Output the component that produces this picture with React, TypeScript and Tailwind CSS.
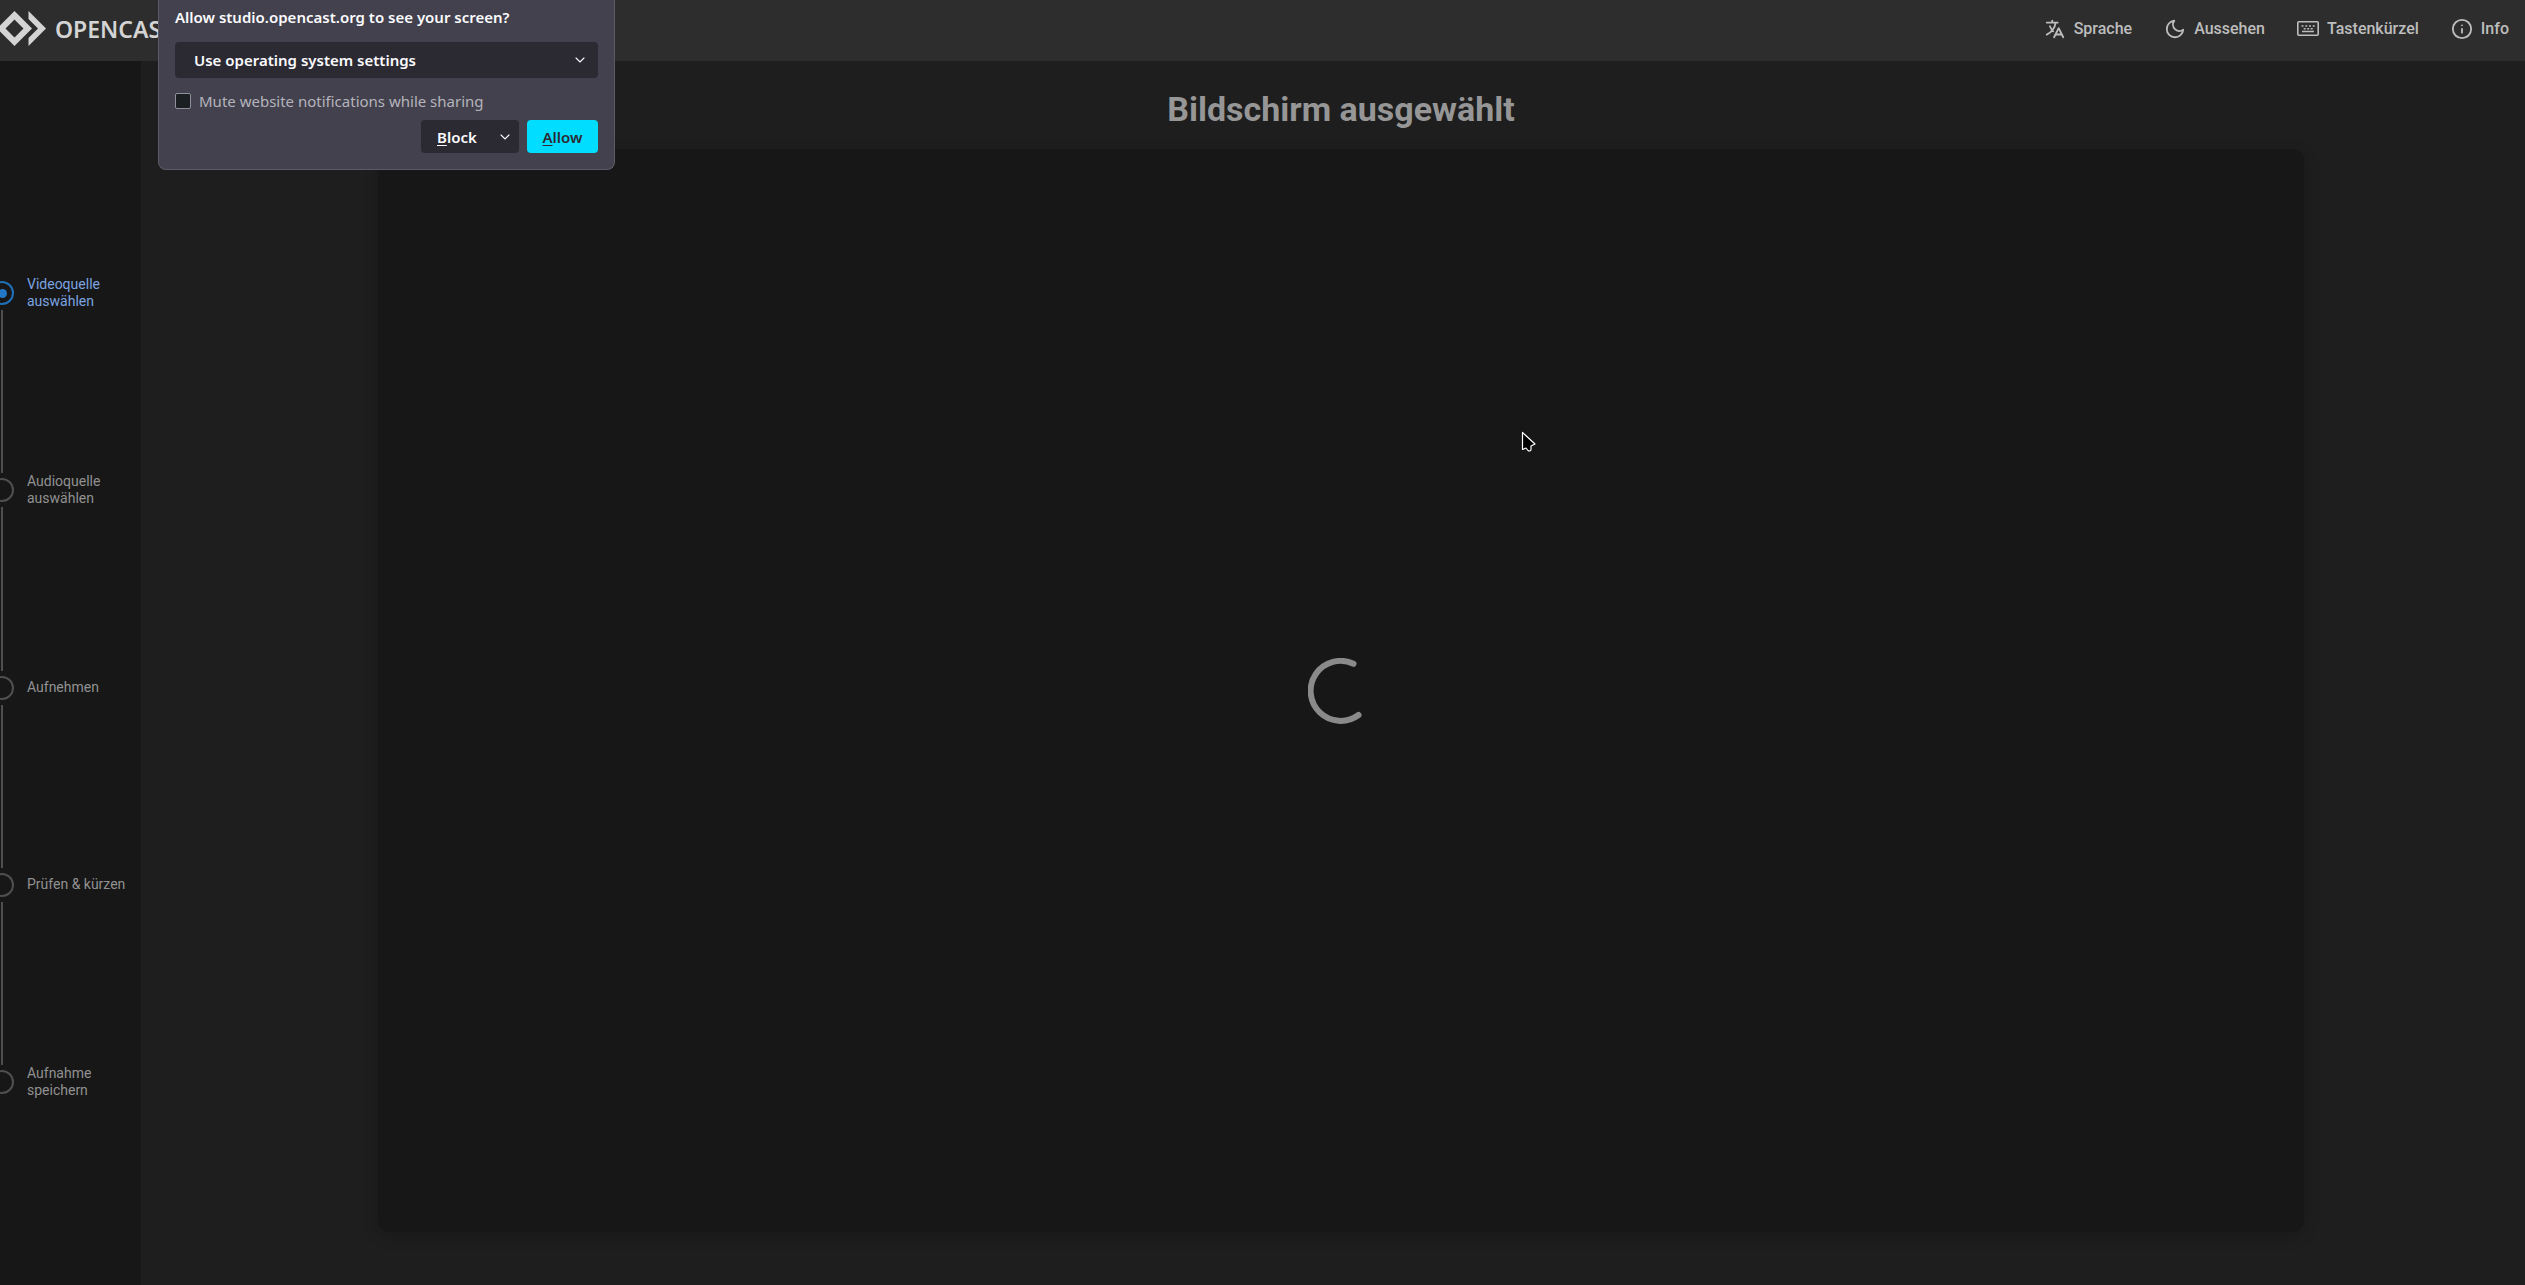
import { useId, useState } from "react";
import type { ReactNode } from "react";
import { FiInfo, FiMoon } from "react-icons/fi";
import { HiOutlineTranslate } from "react-icons/hi";

const steps = ["Videoquelle auswählen", "Audioquelle auswählen", "Aufnehmen", "Prüfen & kürzen", "Aufnahme speichern"];

function KeyboardIcon() {
  return (
    <svg width="22" height="22" viewBox="0 0 22 22" fill="none" aria-hidden="true">
      <rect x="0.8" y="3.8" width="20.4" height="13.4" rx="1" stroke="currentColor" strokeWidth="1.6" />
      <path
        d="M4.5 8h2M8.300 8h2M12 8h2M15.700 8h2M6.700 10.800h2M10.200 10.800h2M13.700 10.800h2M5 13.600h12"
        stroke="currentColor"
        strokeWidth="1.5"
      />
    </svg>
  );
}

function Logo() {
  return (
    <a href="#" className="flex items-center gap-2 text-[#d4d4d4]" aria-label="Opencast Studio">
      <svg width="47" height="36" viewBox="0 0 47 36" fill="currentColor" aria-hidden="true">
        <path fillRule="evenodd" d="M14.500 0 32 17.500 14.500 35-3 17.500ZM14.500 8.500 5.500 17.500l9 9 9-9Z" />
        <path d="M28.500 0 46 17.500 28.500 35V27l9.500-9.500L28.500 8Z" />
      </svg>
      <span className="font-['Noto_Sans',sans-serif] text-[23px] leading-9 font-semibold">OPENCAST</span>
    </a>
  );
}

function MenuButton({ icon, label }: { icon: ReactNode; label: string }) {
  return (
    <button type="button" className="flex items-center gap-2 text-base leading-6 font-medium">
      {icon}
      {label}
    </button>
  );
}

function Header() {
  return (
    <header className="flex h-[61px] items-center justify-between bg-[#2d2d2d] pb-[3px] text-[#bdbdbd]">
      <Logo />
      <nav className="flex items-center gap-8 pr-4">
        <MenuButton icon={<HiOutlineTranslate size={22} />} label="Sprache" />
        <MenuButton icon={<FiMoon size={22} />} label="Aussehen" />
        <MenuButton icon={<KeyboardIcon />} label="Tastenkürzel" />
        <MenuButton icon={<FiInfo size={22} />} label="Info" />
      </nav>
    </header>
  );
}

function StepList({ current }: { current: number }) {
  return (
    <aside className="flex w-[141px] shrink-0 flex-col overflow-hidden bg-[#171717] pt-[220px] pb-[191px]">
      <ol className="-ml-2.5 flex flex-1 flex-col">
        {steps.map((step, index) => {
          const active = index === current;
          const last = index === steps.length - 1;
          return (
            <li key={step} className={`flex gap-[13px] ${last ? "" : "flex-1"}`}>
              <div className="flex w-6 shrink-0 flex-col items-center gap-[5px]">
                <span
                  className={`flex size-6 shrink-0 items-center justify-center rounded-full border-2 ${
                    active ? "border-[#1f70b8]" : "border-[#4f4f4f]"
                  }`}
                >
                  {active ? <span className="size-[9px] rounded-full bg-[#2378c8]" /> : null}
                </span>
                {last ? null : <span className="mb-[5px] w-0.5 flex-1 bg-[#4f4f4f]" />}
              </div>
              <span
                className={`flex h-6 w-[100px] items-center text-sm leading-[17px] ${
                  active ? "text-[#7ca4e0]" : "text-[#919191]"
                }`}
              >
                <span className={step.includes("&") ? "" : "w-20"}>{step}</span>
              </span>
            </li>
          );
        })}
      </ol>
    </aside>
  );
}

function Spinner() {
  return (
    <svg width="66" height="66" viewBox="0 0 66 66" fill="none" role="status" aria-label="Laden">
      <path d="M45.500 5.800A30 30 0 1 0 50.500 57" stroke="#8a8a8a" strokeWidth="6" strokeLinecap="round" />
    </svg>
  );
}

function Chevron() {
  return (
    <svg width="10" height="6" viewBox="0 0 10 6" fill="none" aria-hidden="true">
      <path d="M1 1l4 4 4-4" stroke="#fbfbfe" strokeWidth="1.100" strokeLinecap="round" />
    </svg>
  );
}

function PermissionPrompt() {
  const sourceId = useId();
  const muteId = useId();
  const [muted, setMuted] = useState(false);

  return (
    <div
      role="dialog"
      aria-label="Screen sharing"
      className="absolute top-0 left-[158px] w-[457px] rounded-b-lg border border-t-0 border-[#5b5a66] bg-[#42414d] px-4 pt-[5px] pb-4 font-['Noto_Sans',sans-serif] text-[15px] text-[#fbfbfe]"
    >
      <label htmlFor={sourceId} className="block leading-6 font-semibold">
        Allow studio.opencast.org to see your screen?
      </label>
      <div className="relative mt-[13px]">
        <select
          id={sourceId}
          className="h-9 w-full appearance-none rounded bg-[#2b2a33] px-[19px] font-semibold"
        >
          <option>Use operating system settings</option>
        </select>
        <span className="pointer-events-none absolute inset-y-0 right-[13px] flex items-center">
          <Chevron />
        </span>
      </div>
      <div className="mt-[11px] flex items-center gap-2">
        <input
          id={muteId}
          type="checkbox"
          checked={muted}
          onChange={(event) => setMuted(event.target.checked)}
          className="size-4 appearance-none rounded-xs border border-[#8f8f9d] bg-[#1c1f22] checked:bg-[#00ddff]"
        />
        <label htmlFor={muteId} className="leading-6 text-[#b5b4bc]">
          Mute website notifications while sharing
        </label>
      </div>
      <div className="mt-[7px] flex justify-end gap-2 font-semibold">
        <div className="flex h-[33px] w-[98px] justify-between rounded bg-[#2b2a33]">
          <button type="button" className="pt-px pl-4">
            <span className="underline underline-offset-2">B</span>lock
          </button>
          <button type="button" aria-label="More options" className="px-[9px]">
            <Chevron />
          </button>
        </div>
        <button type="button" className="h-[33px] w-[71px] rounded bg-[#00ddff] pt-px text-[#2b2a33]">
          <span className="underline underline-offset-2">A</span>llow
        </button>
      </div>
    </div>
  );
}

function Cursor() {
  return (
    <svg width="16" height="22" viewBox="0 0 16 22" className="absolute top-[431px] left-[1521px]" aria-hidden="true">
      <path
        d="M1.500 1.500v17l3.500-1.500 2 2.500c1 .9 3 .6 3-1V15l4-2Z"
        fill="#000"
        stroke="#fff"
        strokeWidth="1.200"
        strokeLinejoin="round"
      />
    </svg>
  );
}

export default function App() {
  return (
    <div className="relative flex min-h-screen flex-col bg-[#1e1e1e] font-[Roboto,sans-serif]">
      <Header />
      <div className="flex flex-1">
        <StepList current={0} />
        <main className="flex flex-1 flex-col items-center pt-6 pb-[53px] pl-4">
          <h1 className="text-[34px] leading-12 font-bold text-[#969696]">Bildschirm ausgewählt</h1>
          <div className="mt-4 flex aspect-video flex-1 items-center justify-center rounded-xl bg-[#171717] shadow-[0_4px_16px_rgba(0,0,0,0.2)]">
            <Spinner />
          </div>
        </main>
      </div>
      <PermissionPrompt />
      <Cursor />
    </div>
  );
}
